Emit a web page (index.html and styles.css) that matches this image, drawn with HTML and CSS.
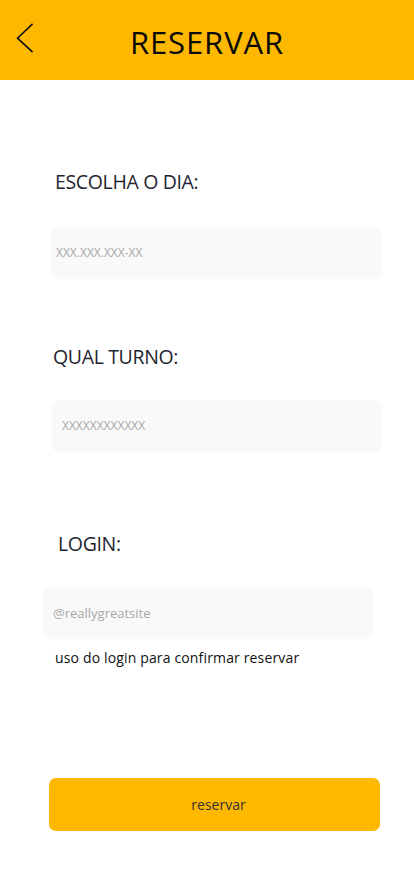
FILE: index.html
```html
<!DOCTYPE html>
<html lang="pt">
<head>
<meta charset="utf-8">
<title>Reservar</title>
<link rel="stylesheet" href="styles.css">
</head>
<body>
<header class="topbar">
  <a class="back" href="#" aria-label="Voltar">
    <svg width="40" height="80" viewBox="0 0 40 80"><polyline points="32,24.5 17.5,38.2 32,51.5" fill="none" stroke="#111" stroke-width="1.6" stroke-linecap="square"/></svg>
  </a>
  <h1 class="title">RESERVAR</h1>
  <span></span>
</header>
<main class="form">
  <section class="group g1">
    <label class="label">ESCOLHA O DIA:</label>
    <div class="field"><span class="ph ph-sm">XXX.XXX.XXX-XX</span></div>
  </section>
  <section class="group g2">
    <label class="label">QUAL TURNO:</label>
    <div class="field"><span class="ph ph-sm">XXXXXXXXXXXX</span></div>
  </section>
  <section class="group g3">
    <label class="label">LOGIN:</label>
    <div class="field"><span class="ph">@reallygreatsite</span></div>
    <p class="help">uso do login para confirmar reservar</p>
  </section>
  <button class="btn" type="button">reservar</button>
</main>
</body>
</html>
```
FILE: styles.css
```css
* { box-sizing: border-box; }
html, body { margin: 0; padding: 0; background: #fff; }
body { font-family: "Open Sans", "Noto Sans", sans-serif; color: #1f2430; }

.topbar {
  height: 80px;
  background: #feb800;
  display: grid;
  grid-template-columns: 1fr auto 1fr;
  align-items: center;
}
.back { display: block; width: 40px; height: 80px; }
.back svg { display: block; }
.title {
  margin: 0;
  font-weight: 400;
  font-size: 31px;
  line-height: 40px;
  color: #0a0a0a;
  letter-spacing: 0.9px;
  padding-top: 4px;
}

.form { display: flex; flex-direction: column; }
.group { display: flex; flex-direction: column; }
.label { font-size: 19.5px; line-height: 24px; letter-spacing: -0.35px; display: block; }
.field {
  height: 52px;
  background: #f9f9f9;
  border-radius: 7px;
  display: flex;
  align-items: center;
}
.ph { color: #a8a8a8; font-size: 13px; }
.ph-sm { font-size: 12px; padding-bottom: 2px; }

.g1 { margin-top: 90px; }
.g1 .label { margin-left: 55px; }
.g1 .field { margin: 33px 32px 0 51px; padding-left: 5px; }

.g2 { margin-top: 66px; }
.g2 .label { margin-left: 53px; }
.g2 .field { margin: 31px 32px 0 52px; padding-left: 10px; }

.g3 { margin-top: 80px; }
.g3 .label { margin-left: 58px; }
.g3 .field { margin: 31px 41px 0 43px; padding-left: 10px; }
.help { margin: 9px 0 0 55px; font-size: 14px; line-height: 20px; letter-spacing: 0.15px; color: #111; }

.btn {
  margin: 110px 34px 0 49px;
  height: 53px;
  border: 0;
  border-radius: 7px;
  background: #feb800;
  font-family: inherit;
  font-size: 14px;
  color: #333;
  padding: 0 0 0 8px;
}
```
